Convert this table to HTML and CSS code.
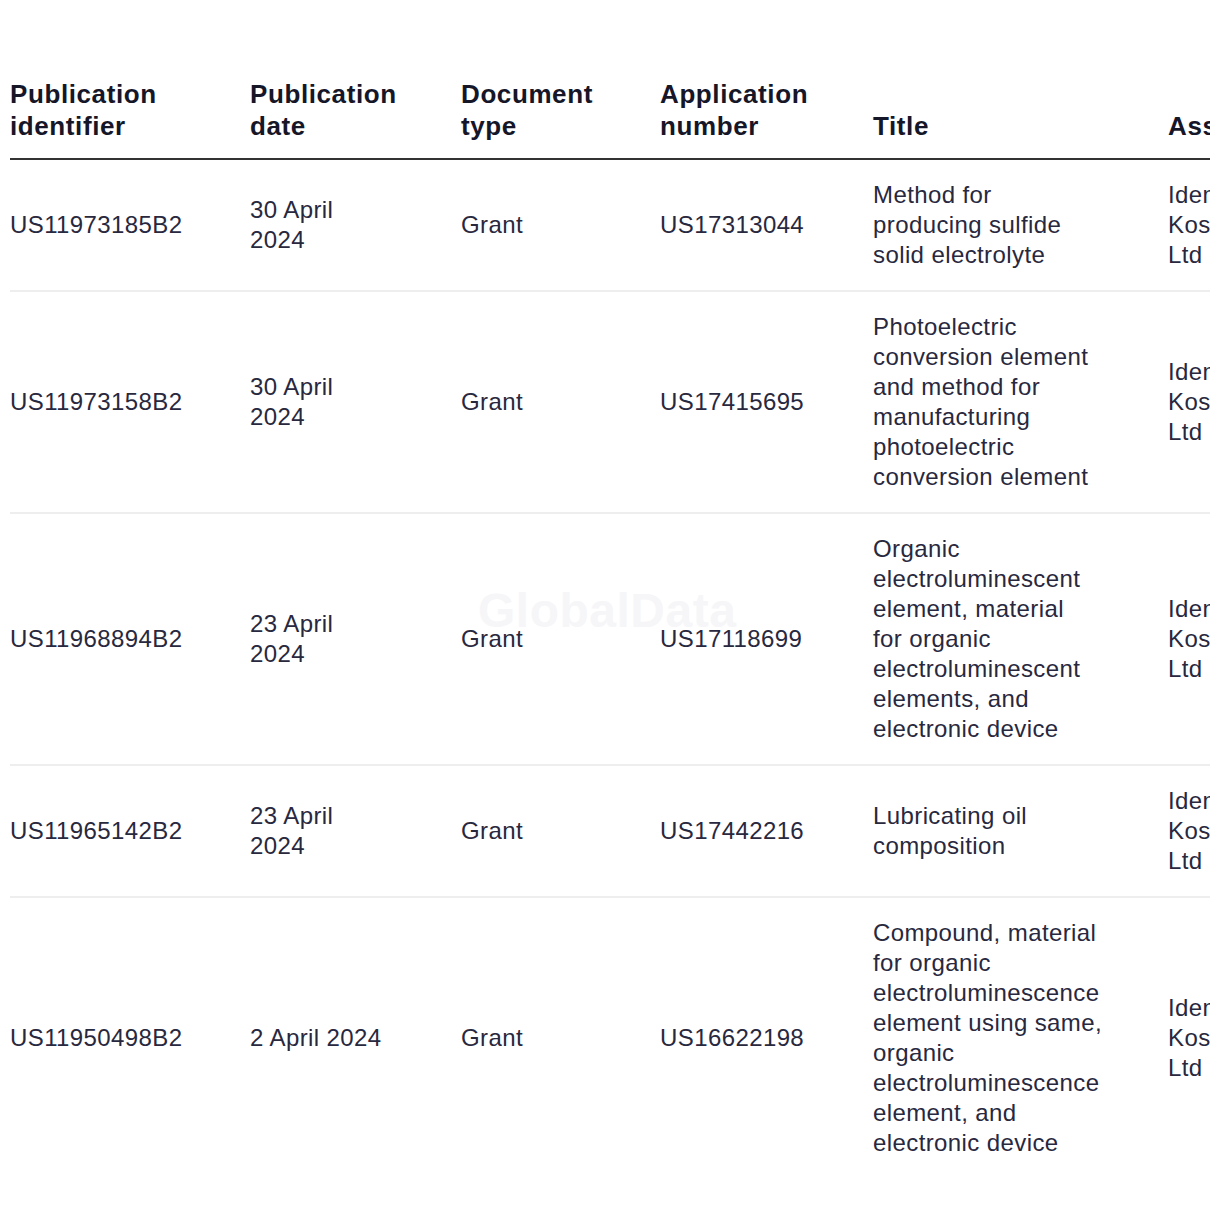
FILE: index.html
```html
<!DOCTYPE html>
<html lang="en">
<head>
<meta charset="utf-8">
<title>Patents</title>
<link rel="stylesheet" href="styles.css">
</head>
<body>
<div class="wrap">
  <table class="patents">
    <colgroup>
      <col class="c1"><col class="c2"><col class="c3"><col class="c4"><col class="c5"><col class="c6">
    </colgroup>
    <thead>
      <tr>
        <th>Publication<br>identifier</th>
        <th>Publication<br>date</th>
        <th>Document<br>type</th>
        <th>Application<br>number</th>
        <th>Title</th>
        <th>Assignee</th>
      </tr>
    </thead>
    <tbody>
      <tr>
        <td>US11973185B2</td>
        <td>30 April<br>2024</td>
        <td>Grant</td>
        <td>US17313044</td>
        <td>Method for<br>producing sulfide<br>solid electrolyte</td>
        <td>Idemitsu<br>Kosan Co<br>Ltd</td>
      </tr>
      <tr>
        <td>US11973158B2</td>
        <td>30 April<br>2024</td>
        <td>Grant</td>
        <td>US17415695</td>
        <td>Photoelectric<br>conversion element<br>and method for<br>manufacturing<br>photoelectric<br>conversion element</td>
        <td>Idemitsu<br>Kosan Co<br>Ltd</td>
      </tr>
      <tr>
        <td>US11968894B2</td>
        <td>23 April<br>2024</td>
        <td>Grant</td>
        <td>US17118699</td>
        <td>Organic<br>electroluminescent<br>element, material<br>for organic<br>electroluminescent<br>elements, and<br>electronic device</td>
        <td>Idemitsu<br>Kosan Co<br>Ltd</td>
      </tr>
      <tr>
        <td>US11965142B2</td>
        <td>23 April<br>2024</td>
        <td>Grant</td>
        <td>US17442216</td>
        <td>Lubricating oil<br>composition</td>
        <td>Idemitsu<br>Kosan Co<br>Ltd</td>
      </tr>
      <tr>
        <td>US11950498B2</td>
        <td>2 April 2024</td>
        <td>Grant</td>
        <td>US16622198</td>
        <td>Compound, material<br>for organic<br>electroluminescence<br>element using same,<br>organic<br>electroluminescence<br>element, and<br>electronic device</td>
        <td>Idemitsu<br>Kosan Co<br>Ltd</td>
      </tr>
    </tbody>
  </table>
  <div class="watermark">GlobalData</div>
</div>
</body>
</html>
```
FILE: styles.css
```css
html, body {
  margin: 0;
  padding: 0;
  background: #ffffff;
}

.wrap {
  position: relative;
  width: 1200px;
  margin: 60px 0 0 10px;
  overflow: hidden;
}

.patents {
  border-collapse: collapse;
  table-layout: fixed;
  width: 1420px;
  font-family: "Liberation Sans", Arial, sans-serif;
  color: #28283e;
}

.c1 { width: 240px; }
.c2 { width: 211px; }
.c3 { width: 199px; }
.c4 { width: 213px; }
.c5 { width: 295px; }
.c6 { width: 262px; }

.patents th {
  text-align: left;
  vertical-align: bottom;
  font-size: 26px;
  line-height: 32px;
  font-weight: 700;
  letter-spacing: 0.6px;
  color: #161629;
  padding: 18px 0 16px 0;
  border-bottom: 2px solid #333333;
  white-space: nowrap;
}

.patents td {
  vertical-align: middle;
  font-size: 24px;
  line-height: 30px;
  letter-spacing: 0.4px;
  padding: 20px 0;
  border-bottom: 2px solid #eeeeee;
  white-space: nowrap;
}

.patents tbody tr:last-child td {
  border-bottom: none;
}

.watermark {
  position: absolute;
  left: 468px;
  top: 525px;
  font-family: "Liberation Sans", Arial, sans-serif;
  font-weight: 700;
  font-size: 48px;
  line-height: 52px;
  letter-spacing: 0.5px;
  color: #f6f6f8;
  pointer-events: none;
}
```
